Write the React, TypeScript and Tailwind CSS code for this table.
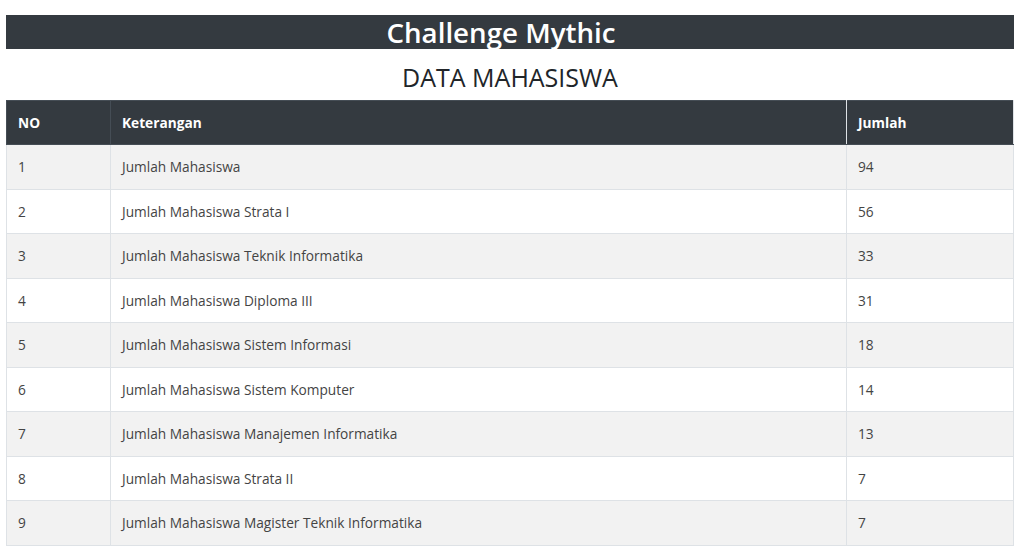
const rows: [number, string, number][] = [
  [1, "Jumlah Mahasiswa", 94],
  [2, "Jumlah Mahasiswa Strata I", 56],
  [3, "Jumlah Mahasiswa Teknik Informatika", 33],
  [4, "Jumlah Mahasiswa Diploma III", 31],
  [5, "Jumlah Mahasiswa Sistem Informasi", 18],
  [6, "Jumlah Mahasiswa Sistem Komputer", 14],
  [7, "Jumlah Mahasiswa Manajemen Informatika", 13],
  [8, "Jumlah Mahasiswa Strata II", 7],
  [9, "Jumlah Mahasiswa Magister Teknik Informatika", 7],
];

export default function App() {
  return (
    <main className="bg-white pl-[6px] pr-[10px] pt-[15px] font-['Open_Sans',sans-serif] text-[#212529]">
      <div className="flex h-[34px] items-center justify-center bg-[#343a40] pt-[2px]">
        <h1 className="mr-[18px] text-[27.7px] font-semibold leading-none text-white">Challenge Mythic</h1>
      </div>
      <h2 className="mt-[13px] text-center text-[25px] leading-[30px] font-normal">DATA MAHASISWA</h2>
      <table className="mt-[8px] w-full border-collapse text-[13.7px]">
        <thead>
          <tr className="h-[44px] bg-[#343a40] text-left text-white">
            <th className="w-[104px] border border-[#454d55] px-[11px] pt-[2px] font-bold">NO</th>
            <th className="border border-[#dee2e6] border-y-[#454d55] px-[11px] pt-[2px] font-bold">Keterangan</th>
            <th className="w-[167px] border border-[#dee2e6] border-y-[#454d55] px-[11px] pt-[2px] font-bold">Jumlah</th>
          </tr>
        </thead>
        <tbody>
          {rows.map(([no, ket, jml]) => (
            <tr key={no} className={no % 2 === 1 ? "h-[44.5px] bg-[#f2f2f2]" : "h-[44.5px] bg-white"}>
              <td className="border border-[#dee2e6] px-[11px] pt-[2px] text-[#444]">{no}</td>
              <td className="border border-[#dee2e6] px-[11px] pt-[2px] text-[#444]">{ket}</td>
              <td className="border border-[#dee2e6] px-[11px] pt-[2px] text-[#444]">{jml}</td>
            </tr>
          ))}
        </tbody>
      </table>
    </main>
  );
}
